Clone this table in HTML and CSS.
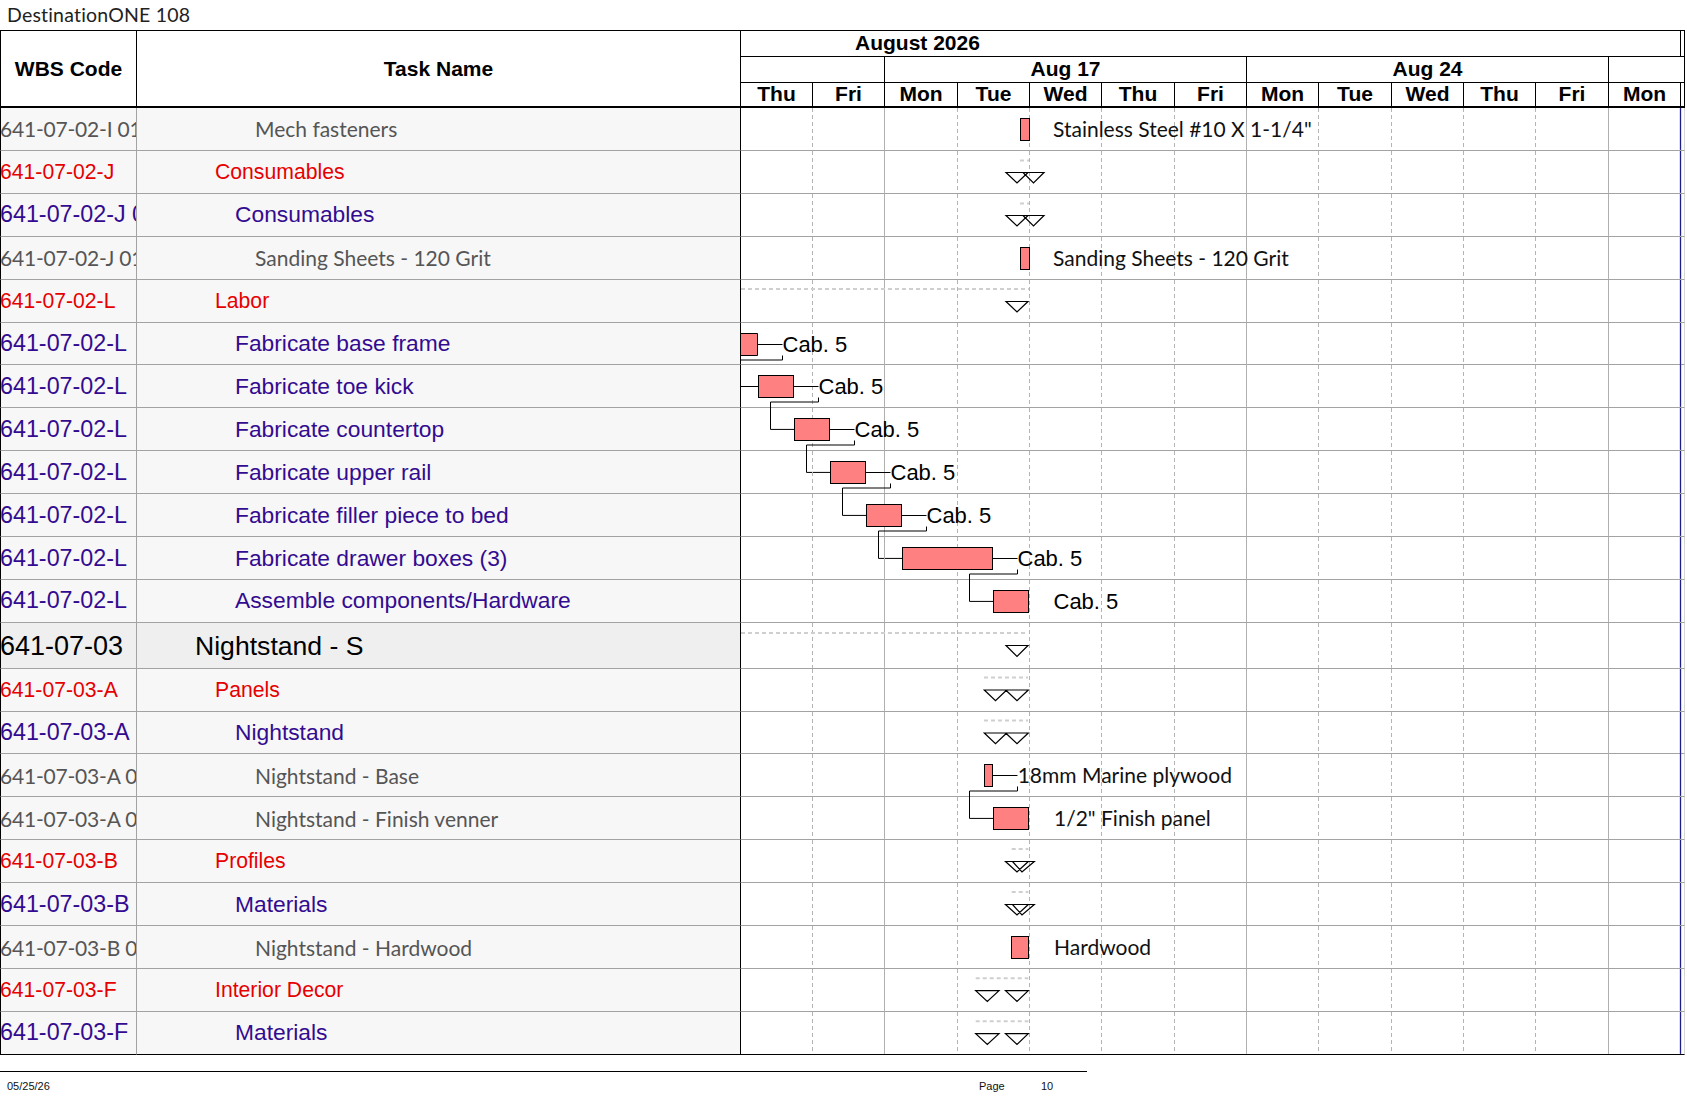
FILE: index.html
```html
<!DOCTYPE html>
<html>
<head>
<meta charset="utf-8">
<title>DestinationONE 108</title>
<link rel="stylesheet" href="styles.css">
</head>
<body>
<svg class="defs" width="0" height="0" aria-hidden="true">
  <defs>
    <g id="grid">
      <path class="gd" d="M71.5 0V41.92M216.5 0V41.92M288.5 0V41.92M360.5 0V41.92M433.5 0V41.92M577.5 0V41.92M650.5 0V41.92M722.5 0V41.92M794.5 0V41.92"/>
      <path class="gs" d="M143.5 0V41.92M505.5 0V41.92M867.5 0V41.92"/>
      <path class="gb" d="M939.5 0V41.92"/>
    </g>
    <g id="gridtall">
      <path class="gd" d="M71.5 0V44.8M216.5 0V44.8M288.5 0V44.8M360.5 0V44.8M433.5 0V44.8M577.5 0V44.8M650.5 0V44.8M722.5 0V44.8M794.5 0V44.8"/>
      <path class="gs" d="M143.5 0V44.8M505.5 0V44.8M867.5 0V44.8"/>
      <path class="gb" d="M939.5 0V44.8"/>
    </g>
  </defs>
</svg>

<div class="title">DestinationONE 108</div>

<div class="sheet">
  <div class="head">
    <div class="hwbs">WBS Code</div>
    <div class="htask">Task Name</div>
    <div class="tscale">
      <div class="month"><div class="month-box">August 2026</div><div class="strip"></div></div>
      <div class="weeks">
        <div class="wk w144"></div>
        <div class="wk w362">Aug 17</div>
        <div class="wk w362">Aug 24</div>
        <div class="wk wrest"></div>
      </div>
      <div class="days">
        <div class="day d72">Thu</div>
        <div class="day d72">Fri</div>
        <div class="day d73">Mon</div>
        <div class="day d72">Tue</div>
        <div class="day d72">Wed</div>
        <div class="day d73">Thu</div>
        <div class="day d72">Fri</div>
        <div class="day d72">Mon</div>
        <div class="day d73">Tue</div>
        <div class="day d72">Wed</div>
        <div class="day d72">Thu</div>
        <div class="day d73">Fri</div>
        <div class="day d72">Mon</div>
        <div class="day strip"></div>
      </div>
    </div>
  </div>

  <div class="rows">
    <!-- 0 -->
    <div class="row">
      <div class="c cw gray"><span class="code">641-07-02-I 01 01</span></div>
      <div class="c ct gray l5">Mech fasteners</div>
      <div class="c cg"><svg class="chart"><use href="#grid"/>
        <rect class="bar" x="279.5" y="10.5" width="9" height="22"/>
        <text class="lc" x="312" y="29.3">Stainless Steel #10 X 1-1/4"</text>
      </svg></div>
    </div>
    <!-- 1 -->
    <div class="row">
      <div class="c cw red"><span class="code">641-07-02-J</span></div>
      <div class="c ct red l3">Consumables</div>
      <div class="c cg"><svg class="chart"><use href="#grid"/>
        <path class="sd" d="M279 9.5H288"/>
        <path class="tri" d="M265 21.5H287L276 32ZM282 21.5H303L292.5 32Z"/>
      </svg></div>
    </div>
    <!-- 2 -->
    <div class="row">
      <div class="c cw purple"><span class="code">641-07-02-J 01</span></div>
      <div class="c ct purple l4">Consumables</div>
      <div class="c cg"><svg class="chart"><use href="#grid"/>
        <path class="sd" d="M279 9.5H288"/>
        <path class="tri" d="M265 21.5H287L276 32ZM282 21.5H303L292.5 32Z"/>
      </svg></div>
    </div>
    <!-- 3 -->
    <div class="row">
      <div class="c cw gray"><span class="code">641-07-02-J 01 01</span></div>
      <div class="c ct gray l5">Sanding Sheets - 120 Grit</div>
      <div class="c cg"><svg class="chart"><use href="#grid"/>
        <rect class="bar" x="279.5" y="10.5" width="9" height="22"/>
        <text class="lc" x="312" y="29.3">Sanding Sheets - 120 Grit</text>
      </svg></div>
    </div>
    <!-- 4 -->
    <div class="row">
      <div class="c cw red"><span class="code">641-07-02-L</span></div>
      <div class="c ct red l3">Labor</div>
      <div class="c cg"><svg class="chart"><use href="#grid"/>
        <path class="sd" d="M0 9H288"/>
        <path class="tri" d="M265 21.5H287L276 32Z"/>
      </svg></div>
    </div>
    <!-- 5 -->
    <div class="row">
      <div class="c cw purple"><span class="code">641-07-02-L</span></div>
      <div class="c ct purple l4">Fabricate base frame</div>
      <div class="c cg"><svg class="chart"><use href="#grid"/>
        <rect class="barfill" x="0" y="10.5" width="16.5" height="22"/>
        <path class="ln" d="M0 10.5H16.5V32.5H0"/>
        <path class="ln" d="M16.5 21.5H41.5M41.5 32.5V37H0"/>
        <text class="la" x="41.5" y="28.7">Cab. 5</text>
      </svg></div>
    </div>
    <!-- 6 -->
    <div class="row">
      <div class="c cw purple"><span class="code">641-07-02-L</span></div>
      <div class="c ct purple l4">Fabricate toe kick</div>
      <div class="c cg"><svg class="chart"><use href="#grid"/>
        <path class="ln" d="M0 21.5H17.5"/>
        <rect class="bar" x="17.5" y="10.5" width="35" height="22"/>
        <path class="ln" d="M52.5 21.5H77.5M77.5 32.5V37H29.5V64.42H53.5"/>
        <text class="la" x="77.5" y="28.7">Cab. 5</text>
      </svg></div>
    </div>
    <!-- 7 -->
    <div class="row">
      <div class="c cw purple"><span class="code">641-07-02-L</span></div>
      <div class="c ct purple l4">Fabricate countertop</div>
      <div class="c cg"><svg class="chart"><use href="#grid"/>
        <rect class="bar" x="53.5" y="10.5" width="35" height="22"/>
        <path class="ln" d="M88.5 21.5H113.5M113.5 32.5V37H65.5V64.42H89.5"/>
        <text class="la" x="113.5" y="28.7">Cab. 5</text>
      </svg></div>
    </div>
    <!-- 8 -->
    <div class="row">
      <div class="c cw purple"><span class="code">641-07-02-L</span></div>
      <div class="c ct purple l4">Fabricate upper rail</div>
      <div class="c cg"><svg class="chart"><use href="#grid"/>
        <rect class="bar" x="89.5" y="10.5" width="35" height="22"/>
        <path class="ln" d="M124.5 21.5H149.5M149.5 32.5V37H101.5V64.42H125.5"/>
        <text class="la" x="149.5" y="28.7">Cab. 5</text>
      </svg></div>
    </div>
    <!-- 9 -->
    <div class="row">
      <div class="c cw purple"><span class="code">641-07-02-L</span></div>
      <div class="c ct purple l4">Fabricate filler piece to bed</div>
      <div class="c cg"><svg class="chart"><use href="#grid"/>
        <rect class="bar" x="125.5" y="10.5" width="35" height="22"/>
        <path class="ln" d="M160.5 21.5H185.5M185.5 32.5V37H137.5V64.42H161.5"/>
        <text class="la" x="185.5" y="28.7">Cab. 5</text>
      </svg></div>
    </div>
    <!-- 10 -->
    <div class="row">
      <div class="c cw purple"><span class="code">641-07-02-L</span></div>
      <div class="c ct purple l4">Fabricate drawer boxes (3)</div>
      <div class="c cg"><svg class="chart"><use href="#grid"/>
        <rect class="bar" x="161.5" y="10.5" width="90" height="22"/>
        <path class="ln" d="M251.5 21.5H276.5M276.5 32.5V37H228.5V64.42H252.5"/>
        <text class="la" x="276.5" y="28.7">Cab. 5</text>
      </svg></div>
    </div>
    <!-- 11 -->
    <div class="row">
      <div class="c cw purple"><span class="code">641-07-02-L</span></div>
      <div class="c ct purple l4">Assemble components/Hardware</div>
      <div class="c cg"><svg class="chart"><use href="#grid"/>
        <rect class="bar" x="252.5" y="10.5" width="35" height="22"/>
        <text class="la" x="312.5" y="28.7">Cab. 5</text>
      </svg></div>
    </div>
    <!-- 12 -->
    <div class="row big">
      <div class="c cw top"><span class="code">641-07-03</span></div>
      <div class="c ct top l2">Nightstand - S</div>
      <div class="c cg"><svg class="chart"><use href="#gridtall"/>
        <path class="sd" d="M0 10H287"/>
        <path class="tri" d="M265 22.5H287L276 33.5Z"/>
      </svg></div>
    </div>
    <!-- 13 -->
    <div class="row">
      <div class="c cw red"><span class="code">641-07-03-A</span></div>
      <div class="c ct red l3">Panels</div>
      <div class="c cg"><svg class="chart"><use href="#grid"/>
        <path class="sd" d="M243 8.5H287"/>
        <path class="tri" d="M243.3 21H265.7L254.5 31.7ZM264.7 21H287.3L276 31.7Z"/>
      </svg></div>
    </div>
    <!-- 14 -->
    <div class="row">
      <div class="c cw purple"><span class="code">641-07-03-A</span></div>
      <div class="c ct purple l4">Nightstand</div>
      <div class="c cg"><svg class="chart"><use href="#grid"/>
        <path class="sd" d="M243 8.5H287"/>
        <path class="tri" d="M243.3 21H265.7L254.5 31.7ZM264.7 21H287.3L276 31.7Z"/>
      </svg></div>
    </div>
    <!-- 15 -->
    <div class="row">
      <div class="c cw gray"><span class="code">641-07-03-A 01 01</span></div>
      <div class="c ct gray l5">Nightstand - Base</div>
      <div class="c cg"><svg class="chart"><use href="#grid"/>
        <rect class="bar" x="243.5" y="10.5" width="8" height="22"/>
        <path class="ln" d="M251.5 21.5H276.5M276.5 32.5V37H228.5V64.42H252.5"/>
        <text class="lc" x="276.7" y="29.3">18mm Marine plywood</text>
      </svg></div>
    </div>
    <!-- 16 -->
    <div class="row">
      <div class="c cw gray"><span class="code">641-07-03-A 01 02</span></div>
      <div class="c ct gray l5">Nightstand - Finish venner</div>
      <div class="c cg"><svg class="chart"><use href="#grid"/>
        <rect class="bar" x="252.5" y="10.5" width="35" height="22"/>
        <text class="lc" x="313" y="29.3">1/2" Finish panel</text>
      </svg></div>
    </div>
    <!-- 17 -->
    <div class="row">
      <div class="c cw red"><span class="code">641-07-03-B</span></div>
      <div class="c ct red l3">Profiles</div>
      <div class="c cg"><svg class="chart"><use href="#grid"/>
        <path class="sd" d="M270.7 9H287.3"/>
        <path class="tri" d="M264.5 21.5H287.3L276 32ZM271.5 21.5H293.3L281 32Z"/>
      </svg></div>
    </div>
    <!-- 18 -->
    <div class="row">
      <div class="c cw purple"><span class="code">641-07-03-B</span></div>
      <div class="c ct purple l4">Materials</div>
      <div class="c cg"><svg class="chart"><use href="#grid"/>
        <path class="sd" d="M270.7 9H287.3"/>
        <path class="tri" d="M264.5 21.5H287.3L276 32ZM271.5 21.5H293.3L281 32Z"/>
      </svg></div>
    </div>
    <!-- 19 -->
    <div class="row">
      <div class="c cw gray"><span class="code">641-07-03-B 01 01</span></div>
      <div class="c ct gray l5">Nightstand - Hardwood</div>
      <div class="c cg"><svg class="chart"><use href="#grid"/>
        <rect class="bar" x="270.5" y="10.5" width="17" height="22"/>
        <text class="lc" x="313" y="29.3">Hardwood</text>
      </svg></div>
    </div>
    <!-- 20 -->
    <div class="row">
      <div class="c cw red"><span class="code">641-07-03-F</span></div>
      <div class="c ct red l3">Interior Decor</div>
      <div class="c cg"><svg class="chart"><use href="#grid"/>
        <path class="sd" d="M234.7 9.3H287.3"/>
        <path class="tri" d="M234.7 21.7H258L246.3 32.4ZM264.5 21.7H287.3L276 32.4Z"/>
      </svg></div>
    </div>
    <!-- 21 -->
    <div class="row">
      <div class="c cw purple"><span class="code">641-07-03-F</span></div>
      <div class="c ct purple l4">Materials</div>
      <div class="c cg"><svg class="chart"><use href="#grid"/>
        <path class="sd" d="M234.7 9.3H287.3"/>
        <path class="tri" d="M234.7 21.7H258L246.3 32.4ZM264.5 21.7H287.3L276 32.4Z"/>
      </svg></div>
    </div>
  </div>
</div>

<div class="footer">
  <div class="f-date">05/25/26</div>
  <div class="f-page">Page</div>
  <div class="f-num">10</div>
</div>
</body>
</html>
```
FILE: styles.css
```css
* { box-sizing: border-box; }

body {
  margin: 0;
  background: #ffffff;
  font-family: "Liberation Sans", Arial, sans-serif;
  color: #000;
}

.defs { position: absolute; width: 0; height: 0; overflow: hidden; }

.title {
  height: 30px;
  padding: 3px 0 0 7px;
  font-family: "Lato", "Noto Sans", sans-serif;
  font-size: 19.5px;
  letter-spacing: 0.2px;
  line-height: 24px;
  color: #222;
  white-space: nowrap;
}

.sheet { width: 1685px; }

/* ---------- header ---------- */
.head {
  display: grid;
  grid-template-columns: 137px 604px 944px;
  height: 78px;
  border-top: 1px solid #000;
  border-bottom: 2px solid #000;
  font-weight: bold;
  font-size: 21px;
}
.hwbs {
  border-left: 1px solid #000;
  border-right: 1px solid #000;
  display: flex;
  align-items: center;
  justify-content: center;
}
.htask {
  border-right: 1px solid #000;
  display: flex;
  align-items: center;
  justify-content: center;
}
.tscale {
  border-right: 1px solid #000;
  display: flex;
  flex-direction: column;
}
.month {
  height: 26px;
  border-bottom: 1px solid #000;
  display: flex;
}
.month-box {
  width: 940px;
  border-right: 1px solid #000;
  padding-left: 114px;
  line-height: 23px;
  white-space: nowrap;
}
.strip { flex: 1; }
.weeks {
  height: 26px;
  border-bottom: 1px solid #000;
  display: flex;
}
.wk {
  border-right: 1px solid #000;
  text-align: center;
  line-height: 23px;
  white-space: nowrap;
}
.w144 { width: 144px; }
.w362 { width: 362px; }
.wrest { flex: 1; border-right: none; }
.days {
  flex: 1;
  display: flex;
}
.day {
  border-right: 1px solid #000;
  text-align: center;
  line-height: 21px;
  white-space: nowrap;
}
.d72 { width: 72px; }
.d73 { width: 73px; }
.day.strip { border-right: none; }

/* ---------- body rows ---------- */
.row {
  display: grid;
  grid-template-columns: 137px 604px 944px;
  height: 42.92px;
}
.row.big { height: 45.8px; }

.c {
  border-bottom: 1px solid #a3a3a3;
  white-space: nowrap;
  overflow: hidden;
  display: flex;
  align-items: center;
}
.row:last-child .c { border-bottom-color: #000; }

.cw {
  border-left: 1px solid #000;
  border-right: 1px solid #a3a3a3;
  background: #f7f7f7;
}
.code {
  display: block;
  margin-left: -1px;
  white-space: nowrap;
}
.ct {
  border-right: 1px solid #000;
  background: #f7f7f7;
}
.cg {
  position: relative;
  overflow: visible;
  background: #fff;
  border-right: 1px solid #d6d6d6;
}

.red { color: #e60000; font-size: 21.2px; }
.purple { color: #330b90; font-size: 22.8px; }
.cw.purple { font-size: 23.3px; }
.gray {
  color: #555555;
  font-family: "Lato", "Noto Sans", sans-serif;
  font-size: 21px;
}
.cw.gray { letter-spacing: -0.2px; }
.top {
  color: #000;
  font-size: 26.6px;
  background: #efefef;
  padding-top: 3px;
}
.cw.top { font-size: 27px; }

.l2 { padding-left: 58px; }
.l3 { padding-left: 78px; }
.l4 { padding-left: 98px; }
.l5 { padding-left: 118px; }

/* ---------- gantt drawing ---------- */
.chart {
  position: absolute;
  left: 0;
  top: 0;
  width: 943px;
  height: 100%;
  overflow: visible;
  z-index: 1;
}
.gd { stroke: #b4b4b4; stroke-width: 1; stroke-dasharray: 4 3; fill: none; }
.gs { stroke: #b0b0b0; stroke-width: 1; fill: none; }
.gb { stroke: #1e1e8a; stroke-width: 1.3; fill: none; }

.bar { fill: #ff8080; stroke: #000; stroke-width: 1; }
.barfill { fill: #ff8080; }
.ln { fill: none; stroke: #000; stroke-width: 1; }
.sd { fill: none; stroke: #cfcfcf; stroke-width: 2; stroke-dasharray: 4 3; }
.tri { fill: none; stroke: #000; stroke-width: 1.2; stroke-linejoin: miter; }

.la {
  font-family: "Liberation Sans", Arial, sans-serif;
  font-size: 22px;
  fill: #000;
}
.lc {
  font-family: "Lato", "Noto Sans", sans-serif;
  font-size: 21px;
  fill: #111;
}

/* ---------- footer ---------- */
.footer {
  width: 1087px;
  margin-top: 16px;
  border-top: 1px solid #000;
  display: grid;
  grid-template-columns: 979px 62px auto;
  font-size: 11px;
  line-height: 28px;
  color: #111;
}
.f-date { padding-left: 7px; }
```
